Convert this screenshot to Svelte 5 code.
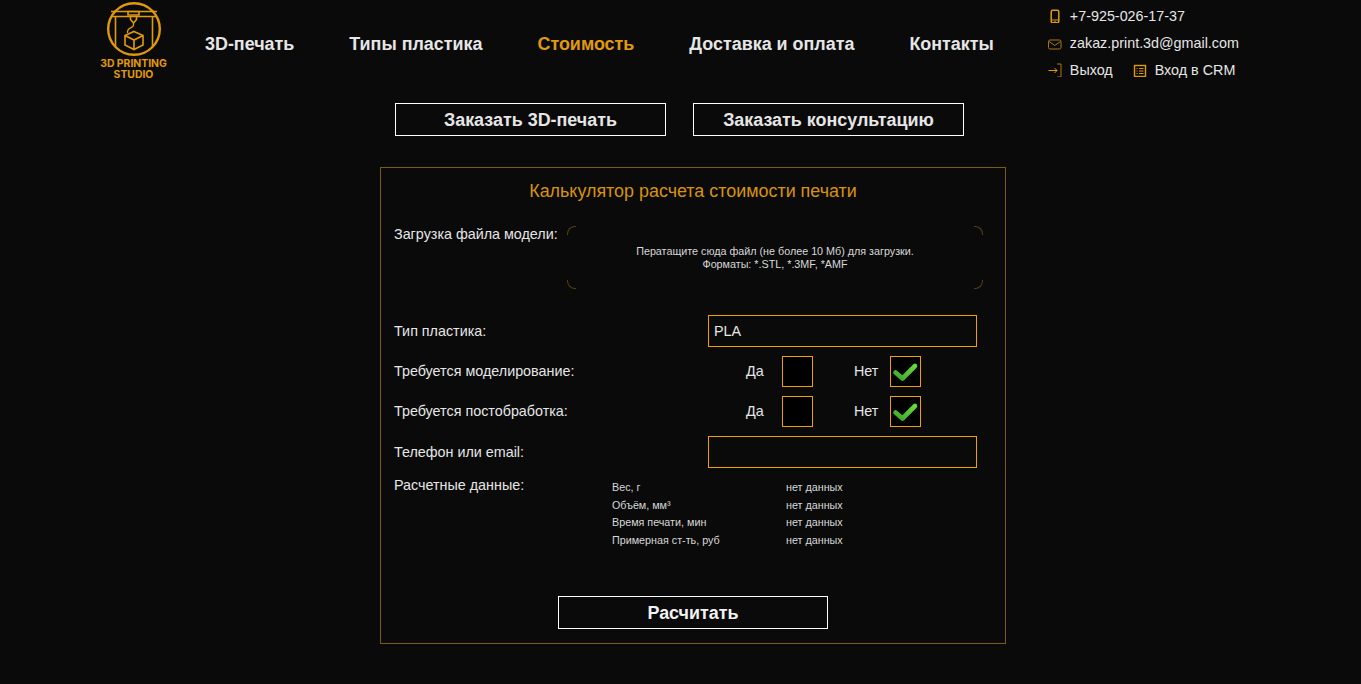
<script>
	const nav = [
		{ label: '3D-печать' },
		{ label: 'Типы пластика' },
		{ label: 'Стоимость', active: true },
		{ label: 'Доставка и оплата' },
		{ label: 'Контакты' }
	];

	const results = [
		['Вес, г', 'нет данных'],
		['Объём, мм³', 'нет данных'],
		['Время печати, мин', 'нет данных'],
		['Примерная ст-ть, руб', 'нет данных']
	];

	const questions = ['Требуется моделирование:', 'Требуется постобработка:'];
</script>

<header class="header">
	<a class="logo" href="#top">
		<svg width="56" height="54" viewBox="0 0 56 54" fill="none" stroke="#e09a0c" stroke-width="2">
			<circle cx="28" cy="27" r="25.800" stroke-width="2.400" />
			<path d="M5 9.500H51M6 14.500H50M9.500 14.500V45M46.500 14.500V45" stroke-width="1.600" />
			<path d="M22 9.500H33V13H22ZM24.500 14.500V17.500L27.500 21L30.500 17.500V14.500" stroke-width="1.600" />
			<path d="M27.500 21V23.500C26 27 21 25 21.500 31" stroke-width="1.300" />
			<path d="M28 29.500L37 33.500V43L28 47.500L19 43V33.500ZM19 33.500L28 38L37 33.500M28 38V47.500" stroke-width="1.600" />
		</svg>
		<span class="logo-text">3D PRINTING<br />STUDIO</span>
	</a>

	<nav class="nav">
		{#each nav as item}
			<a href="#top" class:active={item.active}>{item.label}</a>
		{/each}
	</nav>

	<div class="contacts">
		<div class="contact">
			<svg class="ico" width="14" height="14" viewBox="0 0 14 14" fill="none" stroke="#e09a0c" stroke-width="1.500">
				<rect x="3.200" y="1.300" width="7.600" height="12.400" rx="1.500" />
				<path d="M3.500 11H10.500" stroke-width="1" />
				<path d="M6.300 12.400H7.700" stroke-width="1" />
			</svg>
			<span>+7-925-026-17-37</span>
		</div>
		<div class="contact">
			<svg class="ico" width="14" height="14" viewBox="0 0 14 14" fill="none" stroke="#a9760f" stroke-width="1">
				<rect x="0.500" y="4" width="12.500" height="9" rx="1.500" />
				<path d="M1 5.500L6.800 9.500L12.500 5.500" />
			</svg>
			<span>zakaz.print.3d@gmail.com</span>
		</div>
		<div class="contact">
			<svg class="ico" width="14" height="14" viewBox="0 0 14 14" fill="none" stroke="#e09a0c" stroke-width="1">
				<path d="M0.500 7.500H9M6.500 5L9 7.500L6.500 10" />
				<path d="M9 1H13V14H9" stroke="#a9760f" />
			</svg>
			<span>Выход</span>
			<svg class="ico crm" width="14" height="14" viewBox="0 0 14 14" fill="none" stroke="#e09a0c" stroke-width="1">
				<rect x="1.500" y="2.500" width="11" height="11" stroke-width="1.400" />
				<path d="M3.500 5.500H4.500M6 5.500H10.500M3.500 8H4.500M6 8H10.500M3.500 10.500H4.500M6 10.500H10.500" />
			</svg>
			<span>Вход в CRM</span>
		</div>
	</div>
</header>

<div class="actions">
	<button class="btn" type="button">Заказать 3D-печать</button>
	<button class="btn" type="button">Заказать консультацию</button>
</div>

<form class="calc" onsubmit={(e) => e.preventDefault()}>
	<h2 class="calc-title">Калькулятор расчета стоимости печати</h2>

	<div class="upload-row">
		<span class="label upload-label">Загрузка файла модели:</span>
		<div class="drop">
			<i class="corner tl"></i>
			<i class="corner tr"></i>
			<i class="corner bl"></i>
			<i class="corner br"></i>
			<p>Ператащите сюда файл (не более 10 Мб) для загрузки.<br />Форматы: *.STL, *.3MF, *AMF</p>
		</div>
	</div>

	<div class="row type-row">
		<span class="label">Тип пластика:</span>
		<input class="field" type="text" value="PLA" />
	</div>

	{#each questions as question, i}
		<div class="row check-row">
			<span class="label">{question}</span>
			<span class="option yes">Да</span>
			<span class="box"></span>
			<span class="option no">Нет</span>
			<span class="box">
				<svg width="27" height="22" viewBox="0 0 27 22">
					<defs>
						<linearGradient id="tick{i}" x1="1" y1="0" x2="0" y2="1">
							<stop offset="0" stop-color="#66d93a" />
							<stop offset="1" stop-color="#3ca82a" />
						</linearGradient>
					</defs>
					<path d="M3.500 11.500L10.500 17.500L23 5" fill="none" stroke="url(#tick{i})" stroke-width="4.600" stroke-linecap="round" stroke-linejoin="round" />
				</svg>
			</span>
		</div>
	{/each}

	<div class="row phone-row">
		<span class="label">Телефон или email:</span>
		<input class="field" type="text" />
	</div>

	<div class="results-row">
		<span class="label">Расчетные данные:</span>
		<div class="results">
			{#each results as [name, value]}
				<span>{name}</span>
				<span>{value}</span>
			{/each}
		</div>
	</div>

	<div class="submit">
		<button class="btn btn-submit" type="submit">Расчитать</button>
	</div>
</form>

<style>
	:global(body) {
		background: #0a0a0a;
		color: #e6e6e6;
		font-family: 'Liberation Sans', Arial, sans-serif;
	}

	.header {
		display: flex;
		height: 103px;
		padding-left: 100px;
		box-sizing: border-box;
	}

	.logo {
		display: flex;
		flex-direction: column;
		align-items: center;
		width: 67px;
		padding-top: 2px;
		text-decoration: none;
	}

	.logo svg {
		flex: none;
	}

	.logo-text {
		margin-top: 2px;
		font-family: Inter, sans-serif;
		font-size: 10.400px;
		font-weight: 700;
		line-height: 11px;
		text-align: center;
		color: #e09a0c;
		white-space: nowrap;
	}

	.nav {
		display: flex;
		gap: 55px;
		margin-left: 38px;
		padding-top: 34px;
	}

	.nav a {
		height: 20px;
		font-size: 17.920px;
		font-weight: 700;
		line-height: 20px;
		color: #e6e6e6;
		text-decoration: none;
		white-space: nowrap;
	}

	.nav a.active {
		color: #e09a0c;
	}

	.contacts {
		display: flex;
		flex-direction: column;
		gap: 9px;
		margin-left: 54px;
		padding-top: 7px;
		font-size: 14.336px;
		line-height: 18px;
	}

	.contact {
		display: flex;
		align-items: center;
		height: 18px;
	}

	.ico {
		flex: none;
		margin-right: 8px;
	}

	.ico.crm {
		margin-left: 20px;
	}

	.actions {
		display: flex;
		justify-content: flex-start;
		gap: 27px;
		padding-left: 395px;
	}

	.btn {
		box-sizing: border-box;
		width: 271px;
		height: 33px;
		padding: 2px 0 0;
		background: transparent;
		border: 1px solid #fff;
		border-radius: 0;
		font-family: inherit;
		font-size: 17.920px;
		font-weight: 700;
		color: #e6e6e6;
	}

	.calc {
		box-sizing: border-box;
		width: 626px;
		height: 477px;
		margin: 31px 0 0 380px;
		padding: 0 28px 0 13px;
		border: 1px solid #7a5a14;
	}

	.calc-title {
		margin: 12px 0 0;
		padding-left: 15px;
		font-size: 17.920px;
		font-weight: 400;
		line-height: 22px;
		text-align: center;
		color: #d9930b;
	}

	.label {
		font-size: 14.336px;
		line-height: 18px;
		color: #e6e6e6;
	}

	.upload-row {
		display: flex;
		margin-top: 23px;
	}

	.upload-label {
		flex: none;
		width: 172px;
	}

	.drop {
		position: relative;
		display: flex;
		flex: none;
		align-items: center;
		justify-content: center;
		width: 418px;
		height: 65px;
		margin-right: -28px;
	}

	.drop p {
		margin: 0;
		font-size: 10.752px;
		line-height: 13px;
		text-align: center;
		color: #d8d8d8;
	}

	.corner {
		position: absolute;
		width: 8px;
		height: 8px;
		border: 0 solid #55400f;
	}

	.tl { top: 1px; left: 1px; border-width: 1px 0 0 1px; border-top-left-radius: 8px; }
	.tr { top: 1px; right: 1px; border-width: 1px 1px 0 0; border-top-right-radius: 8px; }
	.bl { bottom: 1px; left: 1px; border-width: 0 0 1px 1px; border-bottom-left-radius: 8px; }
	.br { bottom: 1px; right: 1px; border-width: 0 1px 1px 0; border-bottom-right-radius: 8px; }

	.row {
		display: flex;
		align-items: center;
	}

	.row .label {
		flex: none;
		width: 314px;
	}

	.type-row {
		margin-top: 25px;
	}

	.phone-row {
		margin-top: 9px;
	}

	.field {
		box-sizing: border-box;
		width: 269px;
		height: 32px;
		padding: 0 5px;
		background: transparent;
		border: 1px solid #f0a000;
		border-radius: 0;
		outline: none;
		font-family: inherit;
		font-size: 14.336px;
		color: #e6e6e6;
	}

	.check-row {
		height: 31px;
		margin-top: 9px;
	}

	.check-row .label {
		margin-top: -2px;
	}

	.option {
		flex: none;
		box-sizing: border-box;
		font-size: 14.336px;
		line-height: 18px;
		margin-top: -2px;
	}

	.yes {
		width: 74px;
		padding-left: 38px;
	}

	.no {
		width: 77px;
		padding-left: 41px;
	}

	.box {
		display: flex;
		flex: none;
		align-items: center;
		justify-content: center;
		box-sizing: border-box;
		width: 31px;
		height: 31px;
		background: #000;
		border: 1px solid #f0a000;
	}

	.results-row {
		display: flex;
		margin-top: 8px;
	}

	.results-row .label {
		flex: none;
		width: 218px;
	}

	.results {
		display: grid;
		grid-template-columns: 174px auto;
		grid-auto-rows: 17.500px;
		margin-top: 3px;
		font-size: 10.752px;
		line-height: 17.500px;
		color: #d8d8d8;
	}

	.submit {
		margin: 47px 0 0 164px;
	}

	.btn-submit {
		width: 270px;
		color: #f2f2f2;
	}
</style>
